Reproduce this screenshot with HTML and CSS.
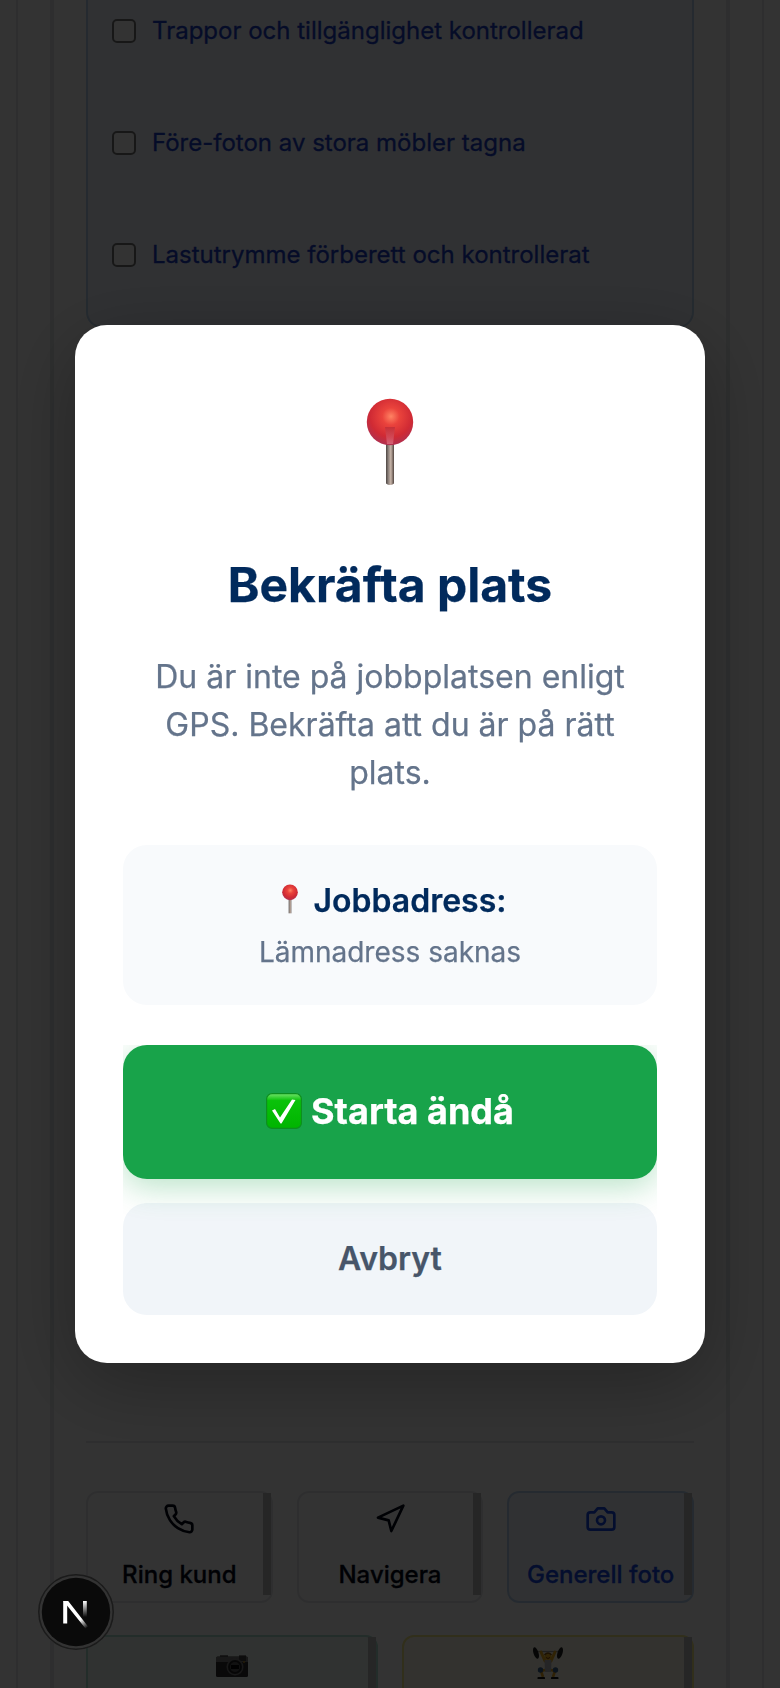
FILE: index.html
```html
<!DOCTYPE html>
<html lang="sv">
<head>
<meta charset="utf-8">
<title>Bekräfta plats</title>
<link rel="stylesheet" href="styles.css">
</head>
<body>
<div class="page">
  <div class="card-outer">
    <div class="card-inner">
      <div class="checklist">
        <label class="check-row"><span class="box"></span><span>Trappor och tillgänglighet kontrollerad</span></label>
        <label class="check-row"><span class="box"></span><span>Före-foton av stora möbler tagna</span></label>
        <label class="check-row"><span class="box"></span><span>Lastutrymme förberett och kontrollerat</span></label>
      </div>
      <div class="actions">
        <div class="row three">
          <div class="action">
            <svg class="icon" viewBox="0 0 24 24"><path d="M22 16.92v3a2 2 0 0 1-2.18 2 19.79 19.79 0 0 1-8.63-3.07 19.5 19.5 0 0 1-6-6 19.79 19.79 0 0 1-3.07-8.67A2 2 0 0 1 4.11 2h3a2 2 0 0 1 2 1.72 12.84 12.84 0 0 0 .7 2.81 2 2 0 0 1-.45 2.11L8.09 9.91a16 16 0 0 0 6 6l1.27-1.27a2 2 0 0 1 2.11-.45 12.84 12.84 0 0 0 2.81.7A2 2 0 0 1 22 16.92z"/></svg>
            <span>Ring kund</span>
          </div>
          <div class="action">
            <svg class="icon" viewBox="0 0 24 24"><polygon points="3 11 22 2 13 21 11 13 3 11"/></svg>
            <span>Navigera</span>
          </div>
          <div class="action blue">
            <svg class="icon" viewBox="0 0 24 24"><path d="M14.5 4h-5L7 7H4a2 2 0 0 0-2 2v9a2 2 0 0 0 2 2h16a2 2 0 0 0 2-2V9a2 2 0 0 0-2-2h-3l-2.5-3z"/><circle cx="12" cy="13" r="3"/></svg>
            <span>Generell foto</span>
          </div>
        </div>
        <div class="row two">
          <div class="action green">
            <svg class="emoji-camera" viewBox="0 0 32 22">
              <rect x="4" y="0" width="8" height="3" fill="#777"/><rect x="23" y="0" width="7" height="4" fill="#888"/>
              <rect x="0" y="1.500" width="32" height="20.500" rx="1.500" fill="#303030"/>
              <rect x="0" y="2" width="32" height="5" fill="#777"/>
              <rect x="23" y="1" width="7" height="5" fill="#444"/>
              <circle cx="19" cy="12" r="8.500" fill="#777"/><circle cx="19" cy="12" r="7" fill="#222"/>
              <circle cx="19" cy="12" r="5" fill="#555"/><path d="M15 12h8" stroke="#050505" stroke-width="4"/>
              <circle cx="28" cy="7" r="1" fill="#b98b20"/>
            </svg>
          </div>
          <div class="action yellow">
            <svg class="emoji-lift" viewBox="0 0 32 32">
              <path d="M4 4.500H28" stroke="#999" stroke-width="1.200"/>
              <ellipse cx="4" cy="6" rx="2.500" ry="6" fill="#222" transform="rotate(-18 4 6)"/>
              <ellipse cx="28" cy="6" rx="2.500" ry="6" fill="#222" transform="rotate(18 28 6)"/>
              <path d="M9 5l4 9M23 5l-4 9" stroke="#efae1d" stroke-width="3" stroke-linecap="round"/>
              <path d="M12.500 13h7l-.5 12h-6z" fill="#b9b9bd"/>
              <circle cx="16" cy="9.500" r="3.500" fill="#f5b51f"/><path d="M12.500 8q3.500-4 7 0" stroke="#8a5a10" stroke-width="1.500" fill="none"/>
              <path d="M14 10.500q2 2 4 0" stroke="#7a3510" fill="none"/>
              <path d="M13 23l-4 1 2 6M19 23l4 1-2 6" stroke="#e8a31b" stroke-width="2.600" fill="none"/>
              <circle cx="8.500" cy="23" r="2.700" fill="#375f8c"/><circle cx="23.500" cy="23" r="2.700" fill="#375f8c"/>
              <path d="M6.500 31H12M20 31h5.500" stroke="#151515" stroke-width="2.200" stroke-linecap="round"/>
            </svg>
          </div>
        </div>
      </div>
    </div>
  </div>
</div>

<div class="overlay">
  <div class="modal">
    <svg class="pin-large" viewBox="0 0 48 88">
      <defs>
        <radialGradient id="ball" cx=".52" cy=".38" r=".62"><stop offset="0" stop-color="#ff8363"/><stop offset=".3" stop-color="#ea433c"/><stop offset=".72" stop-color="#d02a34"/><stop offset="1" stop-color="#b03050"/></radialGradient>
        <linearGradient id="stick"><stop offset="0" stop-color="#4c4542"/><stop offset=".3" stop-color="#8d827c"/><stop offset=".6" stop-color="#c8b5a9"/><stop offset="1" stop-color="#51443f"/></linearGradient>
        <linearGradient id="inside" x2="0" y2="1"><stop offset="0" stop-color="#b12735" stop-opacity=".6"/><stop offset="1" stop-color="#e8808f" stop-opacity=".6"/></linearGradient>
      </defs>
      <path d="M20 44h8v41.500q-4 3-8 0z" fill="url(#stick)"/>
      <circle cx="24" cy="24" r="23.200" fill="url(#ball)"/>
      <path d="M19 29h10l-2 17h-6z" fill="url(#inside)"/>
    </svg>
    <h1>Bekräfta plats</h1>
    <p class="message">Du är inte på jobbplatsen enligt GPS. Bekräfta att du är på rätt plats.</p>
    <div class="address">
      <div class="address-title">
        <svg class="pin-small" viewBox="0 0 48 88"><path d="M20 44h8v43h-8z" fill="url(#stick)"/><circle cx="24" cy="24" r="23.500" fill="url(#ball)"/></svg>
        <span>Jobbadress:</span>
      </div>
      <div class="address-text">Lämnadress saknas</div>
    </div>
    <div class="buttons">
      <button class="btn start">
        <svg class="tick" viewBox="0 0 36 36">
          <defs><linearGradient id="tickbg" x2="0" y2="1"><stop offset="0" stop-color="#72e46b"/><stop offset=".2" stop-color="#0ac20a"/><stop offset="1" stop-color="#00b400"/></linearGradient></defs>
          <rect x=".6" y=".6" width="34.800" height="34.800" rx="5.500" fill="url(#tickbg)" stroke="#0d8f1f" stroke-width="1.200"/>
          <path d="M6 17.500l3-1.500 5 8.500L26 6.500l3.500.5L15.500 30.500h-1z" fill="#fff"/>
        </svg>
        <span>Starta ändå</span>
      </button>
      <button class="btn cancel">Avbryt</button>
    </div>
  </div>
</div>

<div class="dev-badge">
  <svg viewBox="0 0 76 76">
    <defs>
      <linearGradient id="nd" gradientUnits="userSpaceOnUse" x1="38" y1="40" x2="49" y2="54"><stop offset="0" stop-color="#fff"/><stop offset=".4" stop-color="#fff"/><stop offset="1" stop-color="#fff" stop-opacity="0"/></linearGradient>
      <linearGradient id="ns" gradientUnits="userSpaceOnUse" x1="0" y1="27" x2="0" y2="43"><stop offset="0" stop-color="#fff"/><stop offset="1" stop-color="#fff" stop-opacity="0"/></linearGradient>
    </defs>
    <circle cx="38" cy="38" r="37.200" fill="#333" stroke="#1b1b1b" stroke-width="1.500"/>
    <circle cx="38" cy="38" r="34.200" fill="#0a0a0a"/>
    <path d="M27.200 27V49.500" stroke="#fff" stroke-width="4"/>
    <path d="M25.200 27h5L50 52.500l-2.500 2L27 29z" fill="url(#nd)"/>
    <rect x="45" y="27" width="3.800" height="16" fill="url(#ns)"/>
  </svg>
</div>
</body>
</html>
```
FILE: styles.css
```css
* { box-sizing: border-box; }
body { margin: 0; background: #fff; font-family: Inter, "Liberation Sans", sans-serif; }

.page { height: 1688px; overflow: hidden; padding: 0 16px; }
.card-outer { height: 100%; border: solid #e5e7eb; border-width: 0 2px; padding: 0 32px; }
.card-inner { height: 100%; border: solid #e5e7eb; border-width: 0 4px; padding: 0 32px; }

.checklist {
  height: 328px; overflow: hidden; padding: 0 24px;
  display: flex; flex-direction: column; justify-content: flex-start;
  background: #eff5fc; border: 2px solid #b9d3ee; border-top: 0; border-radius: 0 0 16px 16px;
}
.check-row {
  display: flex; align-items: center; gap: 16px; height: 112px; flex: none;
  font-size: 24px; line-height: 32px; color: #193cc8; -webkit-text-stroke: .3px currentColor;
}
.check-row:first-child { height: 87px; padding-bottom: 25px; }
.box { width: 24px; height: 24px; border: 2px solid #767676; border-radius: 5px; background: #fff; }

.actions {
  margin-top: 1113px; border-top: 2px solid #e5e7eb; padding-top: 48px;
  display: flex; flex-direction: column; gap: 32px;
}
.row { display: grid; gap: 24px; }
.three { grid-template-columns: repeat(3, 1fr); }
.two { grid-template-columns: repeat(2, 1fr); }
.action {
  position: relative; height: 112px; padding-top: 10px;
  display: flex; flex-direction: column; align-items: center; gap: 24px;
  border: 2px solid #e5e7eb; border-radius: 12px;
  font-size: 24px; line-height: 32px; font-weight: 500; color: #020618; white-space: nowrap;
  -webkit-text-stroke: .3px currentColor;
}
.action::after {
  content: ""; position: absolute; top: 0; right: 0; width: 8px; height: 102px; background: #bebebe;
}
.action.blue { background: #eff5fc; border-color: #b9d3ee; color: #1447e6; }
.action.green { background: #eef8f3; border-color: #b0e0cf; padding-top: 18px; }
.action.yellow { background: #fdf9e8; border-color: #f5e985; }
.icon { width: 32px; height: 32px; flex: none; fill: none; stroke: currentColor; stroke-width: 2; stroke-linecap: round; stroke-linejoin: round; }
.emoji-camera { width: 32px; height: 22px; }
.emoji-lift { width: 32px; height: 32px; }

.overlay {
  position: fixed; inset: 0; background: rgba(0, 0, 0, .8);
  display: flex; align-items: center; justify-content: center;
}
.modal {
  width: 630px; height: 1038px; padding: 48px; border-radius: 32px; background: #fff;
  box-shadow: 0 20px 80px rgba(0, 0, 0, .3);
  display: flex; flex-direction: column; align-items: center; text-align: center;
}
.pin-large { width: 48px; height: 88px; margin-top: 25px; flex: none; }
h1 { margin: 70px 0 0; font-size: 48px; line-height: 58px; font-weight: 700; color: #012a5c; -webkit-text-stroke: .25px currentColor; }
.message { margin: 39px 0 0; font-size: 32px; line-height: 48px; color: #64748b; -webkit-text-stroke: .25px currentColor; }
.address {
  width: 534px; height: 160px; margin-top: 48px; padding-top: 32px; flex: none;
  border-radius: 24px; background: #f8fafc;
}
.address-title {
  display: flex; justify-content: center; gap: 16px; padding-left: 8px;
  font-size: 32px; line-height: 48px; font-weight: 600; color: #012a5c;
  -webkit-text-stroke: .25px currentColor;
}
.pin-small { width: 16px; height: 30px; margin: 7px 0 0 0; }
.address-text { margin-top: 6px; font-size: 28px; line-height: 42px; color: #64748b; -webkit-text-stroke: .25px currentColor; }

.buttons { width: 534px; height: 270px; margin-top: 40px; overflow: hidden; flex: none; display: flex; flex-direction: column; gap: 24px; }
.btn {
  display: flex; align-items: center; justify-content: center; width: 100%;
  border: 0; padding: 0 0 2px; border-radius: 24px; font-family: inherit; flex: none;
}
.start {
  position: relative; height: 134px; gap: 9px; background: #18a34a; color: #fff;
  font-size: 36px; font-weight: 700; box-shadow: 0 8px 32px rgba(22, 163, 74, .3);
  -webkit-text-stroke: .25px currentColor;
}
.tick { width: 36px; height: 36px; }
.cancel { height: 112px; background: #f1f5f9; color: #475569; font-size: 32px; font-weight: 600; -webkit-text-stroke: .25px currentColor; }

.dev-badge { position: fixed; left: 38px; top: 1574px; width: 76px; height: 76px; }
.dev-badge svg { display: block; }
```
